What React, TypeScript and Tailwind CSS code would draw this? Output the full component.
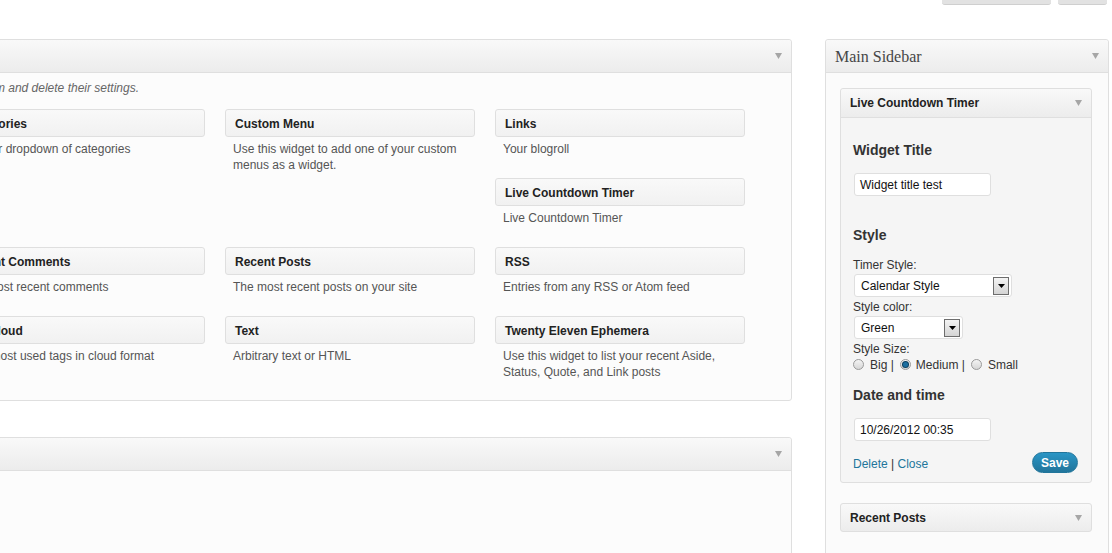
import React from "react";

const Arrow = ({ cls = "" }: { cls?: string }) => (
  <svg width="7" height="6" viewBox="0 0 7 6" className={cls}>
    <path d="M0 0 H7 L3.5 6 Z" fill="#a6a6a6" />
  </svg>
);

type W = { t: string; d?: string } | null;

const rows: W[][] = [
  [
    { t: "Categories", d: "A list or dropdown of categories" },
    { t: "Custom Menu", d: "Use this widget to add one of your custom menus as a widget." },
    { t: "Links", d: "Your blogroll" },
  ],
  [null, null, { t: "Live Countdown Timer", d: "Live Countdown Timer" }],
  [
    { t: "Recent Comments", d: "The most recent comments" },
    { t: "Recent Posts", d: "The most recent posts on your site" },
    { t: "RSS", d: "Entries from any RSS or Atom feed" },
  ],
  [
    { t: "Tag Cloud", d: "Your most used tags in cloud format" },
    { t: "Text", d: "Arbitrary text or HTML" },
    { t: "Twenty Eleven Ephemera", d: "Use this widget to list your recent Aside, Status, Quote, and Link posts" },
  ],
];

const Avail = ({ w }: { w: W }) => (
  <div className="h-[69px] w-[250px]">
    {w && (
      <>
        <div className="h-[28px] rounded-[3px] border border-[#dfdfdf] bg-linear-to-b from-[#f9f9f9] to-[#f1f1f1] pl-[9px] pt-[1px] flex items-center text-[12px] font-bold text-[#222]">
          {w.t}
        </div>
        <div className="mt-[4px] pl-[8px] pr-[12px] text-[12px] leading-[16px] text-[#555]">{w.d}</div>
      </>
    )}
  </div>
);

const PanelHeader = ({ children }: { children?: React.ReactNode }) => (
  <div className="h-[33px] border-b border-[#dfdfdf] bg-linear-to-b from-[#f9f9f9] to-[#ececec] flex items-center justify-between pr-[9px] rounded-t-[3px]">
    <div>{children}</div>
    <Arrow />
  </div>
);

const Radio = ({ on = false }: { on?: boolean }) => (
  <span className="w-[11px] h-[11px] rounded-full border border-[#9a9a9a] bg-linear-to-b from-[#f4f4f4] to-[#d6d6d6] flex items-center justify-center shrink-0">
    {on && <span className="w-[5px] h-[5px] rounded-full bg-[#1c6fa0] ring-1 ring-[#0b3f5f]" />}
  </span>
);

const Select = ({ v, w }: { v: string; w: string }) => (
  <div className={`${w} h-[23px] rounded-[3px] border border-[#dfdfdf] bg-white flex items-center justify-between pl-[6px] pr-[2px] text-[12px] text-[#111]`}>
    <span>{v}</span>
    <span className="w-[16px] h-[18px] border border-[#6d6d6d] bg-linear-to-b from-[#f4f4f4] to-[#d4d4d4] flex items-center justify-center">
      <svg width="7" height="4" viewBox="0 0 7 4">
        <path d="M0 0 H7 L3.5 4 Z" fill="#000" />
      </svg>
    </span>
  </div>
);

const Input = ({ v }: { v: string }) => (
  <div className="w-[137px] h-[23px] ml-[1px] rounded-[3px] border border-[#dfdfdf] bg-white flex items-center pl-[5px] text-[12px] text-[#111]">
    {v}
  </div>
);

export default function App() {
  return (
    <div className="w-[1112px] h-[553px] overflow-hidden bg-white font-['Liberation_Sans',Arial,sans-serif]">
      <div className="flex justify-end gap-[7px] pr-[5px] h-[5px]">
        <div className="w-[109px] h-[5px] rounded-b-[3px] bg-[#e2e2e2] border-b border-[#cfcfcf]" />
        <div className="w-[49px] h-[5px] rounded-b-[3px] bg-[#e2e2e2] border-b border-[#cfcfcf]" />
      </div>
      <div className="flex mt-[34px] items-start">
        <div className="ml-[-66px] w-[858px] shrink-0 flex flex-col gap-[36px]">
          <div className="h-[362px] border border-[#dfdfdf] rounded-[3px] bg-[#fcfcfc] overflow-hidden">
            <PanelHeader />
            <div className="pt-[7px] pl-[20px]">
              <div className="flex justify-end w-[184px] text-[12px] leading-[16px] italic text-[#666]">
                <span className="whitespace-nowrap">
                  Drag widgets from here to a sidebar on the right to activate them. Drag widgets back here to deactivate them and delete their settings.
                </span>
              </div>
              <div className="mt-[13px] flex flex-col">
                {rows.map((r, i) => (
                  <div key={i} className="flex gap-[20px]">
                    {r.map((w, j) => (
                      <Avail key={j} w={w} />
                    ))}
                  </div>
                ))}
              </div>
            </div>
          </div>
          <div className="h-[200px] border border-[#dfdfdf] rounded-t-[3px] bg-[#fcfcfc]">
            <PanelHeader />
          </div>
        </div>

        <div className="ml-[33px] w-[284px] shrink-0 h-[520px] border border-[#dfdfdf] rounded-t-[3px] bg-[#fbfbfb]">
          <div className="h-[33px] border-b border-[#dfdfdf] bg-linear-to-b from-[#f9f9f9] to-[#ececec] flex items-center justify-between pl-[9px] pr-[9px] rounded-t-[3px]">
            <span className="pt-[2px] font-['Liberation_Serif',Georgia,serif] text-[16px] text-[#464646]">Main Sidebar</span>
            <Arrow />
          </div>
          <div className="pt-[15px] pl-[14px]">
            <div className="w-[252px] border border-[#dfdfdf] rounded-[3px] bg-[#f5f5f5]">
              <div className="h-[29px] border-b border-[#dfdfdf] bg-linear-to-b from-[#f9f9f9] to-[#ececec] flex items-center justify-between pl-[9px] pr-[9px] rounded-t-[3px]">
                <span className="text-[12px] font-bold text-[#222]">Live Countdown Timer</span>
                <Arrow />
              </div>
              <div className="pl-[12px] pr-[13px] pt-[23px] pb-[9px] text-[12px] text-[#333] flex flex-col">
                <div className="text-[14px] leading-[18px] font-bold">Widget Title</div>
                <div className="mt-[14px]">
                  <Input v="Widget title test" />
                </div>
                <div className="mt-[30px] text-[14px] leading-[18px] font-bold">Style</div>
                <div className="mt-[12px] h-[16px] leading-[18px]">Timer Style:</div>
                <div className="mt-[2px] ml-[1px]">
                  <Select v="Calendar Style" w="w-[158px]" />
                </div>
                <div className="mt-[1px] h-[16px] leading-[18px]">Style color:</div>
                <div className="mt-[2px] ml-[1px]">
                  <Select v="Green" w="w-[109px]" />
                </div>
                <div className="mt-[1px] h-[16px] leading-[18px]">Style Size:</div>
                <div className="flex items-center leading-[16px] h-[16px] pt-[1px]">
                  <Radio />
                  <span className="ml-[6px]">Big |</span>
                  <span className="ml-[6px]"><Radio on /></span>
                  <span className="ml-[5px]">Medium |</span>
                  <span className="ml-[6px]"><Radio /></span>
                  <span className="ml-[6px]">Small</span>
                </div>
                <div className="mt-[14px] text-[14px] leading-[18px] font-bold">Date and time</div>
                <div className="mt-[14px]">
                  <Input v="10/26/2012 00:35" />
                </div>
                <div className="mt-[11px] flex items-start justify-between h-[21px]">
                  <div className="mt-[4px] leading-[16px]">
                    <span className="text-[#21759b]">Delete</span>
                    <span className="text-[#333]"> | </span>
                    <span className="text-[#21759b]">Close</span>
                  </div>
                  <div className="h-[21px] w-[46px] rounded-full border border-[#21759b] bg-linear-to-b from-[#2a95c5] to-[#21759b] text-white font-bold text-[12px] flex items-center justify-center">
                    Save
                  </div>
                </div>
              </div>
            </div>
            <div className="mt-[20px] w-[252px] h-[29px] border border-[#dfdfdf] rounded-[3px] bg-linear-to-b from-[#f9f9f9] to-[#ececec] flex items-center justify-between pl-[9px] pr-[9px]">
              <span className="pt-[1px] text-[12px] font-bold text-[#222]">Recent Posts</span>
              <Arrow />
            </div>
          </div>
        </div>
      </div>
    </div>
  );
}
